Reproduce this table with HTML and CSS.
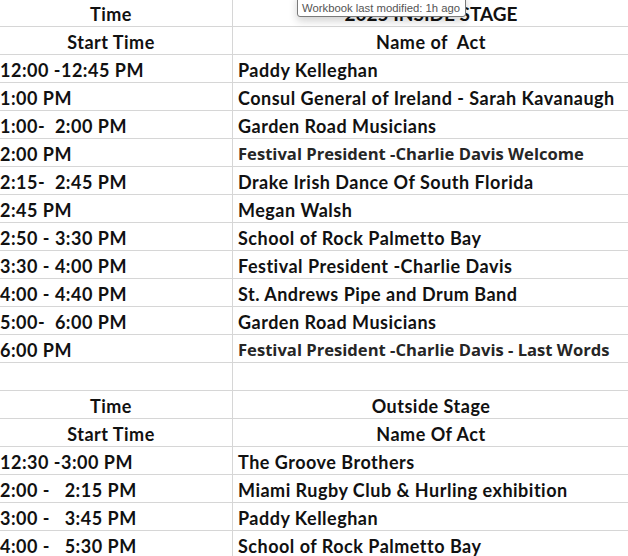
FILE: index.html
```html
<!DOCTYPE html>
<html>
<head>
<meta charset="utf-8">
<link rel="stylesheet" href="styles.css">
</head>
<body>
<div class="sheet">
  <div class="cell time head">Time</div><div class="cell act head title">2025 INSIDE STAGE</div>
  <div class="cell time head">Start Time</div><div class="cell act head">Name of&nbsp; Act</div>
  <div class="cell time">12:00 -12:45 PM</div><div class="cell act">Paddy Kelleghan</div>
  <div class="cell time">1:00 PM</div><div class="cell act">Consul General of Ireland - Sarah Kavanaugh</div>
  <div class="cell time">1:00-&nbsp; 2:00 PM</div><div class="cell act">Garden Road Musicians</div>
  <div class="cell time">2:00 PM</div><div class="cell act alt">Festival President -Charlie Davis Welcome</div>
  <div class="cell time">2:15-&nbsp; 2:45 PM</div><div class="cell act">Drake Irish Dance Of South Florida</div>
  <div class="cell time">2:45 PM</div><div class="cell act">Megan Walsh</div>
  <div class="cell time">2:50 - 3:30 PM</div><div class="cell act">School of Rock Palmetto Bay</div>
  <div class="cell time">3:30 - 4:00 PM</div><div class="cell act">Festival President -Charlie Davis</div>
  <div class="cell time">4:00 - 4:40 PM</div><div class="cell act">St. Andrews Pipe and Drum Band</div>
  <div class="cell time">5:00-&nbsp; 6:00 PM</div><div class="cell act">Garden Road Musicians</div>
  <div class="cell time">6:00 PM</div><div class="cell act alt">Festival President -Charlie Davis - Last Words</div>
  <div class="cell time"></div><div class="cell act"></div>
  <div class="cell time head">Time</div><div class="cell act head">Outside Stage</div>
  <div class="cell time head">Start Time</div><div class="cell act head">Name Of Act</div>
  <div class="cell time">12:30 -3:00 PM</div><div class="cell act">The Groove Brothers</div>
  <div class="cell time">2:00 -&nbsp;&nbsp; 2:15 PM</div><div class="cell act">Miami Rugby Club &amp; Hurling exhibition</div>
  <div class="cell time">3:00 -&nbsp;&nbsp; 3:45 PM</div><div class="cell act">Paddy Kelleghan</div>
  <div class="cell time">4:00 -&nbsp;&nbsp; 5:30 PM</div><div class="cell act">School of Rock Palmetto Bay</div>
</div>
<div class="tooltip">Workbook last modified: 1h ago</div>
</body>
</html>
```
FILE: styles.css
```css
html, body {
  margin: 0;
  padding: 0;
  background: #ffffff;
  overflow: hidden;
}
body {
  width: 628px;
  height: 556px;
  position: relative;
  font-family: Lato, "Open Sans", sans-serif;
  color: #111111;
}
.sheet {
  display: grid;
  grid-template-columns: 233px 420px;
  grid-auto-rows: 28px;
  margin-top: -1px;
}
.cell {
  box-sizing: border-box;
  border-bottom: 1px solid #d6d6d6;
  display: flex;
  align-items: center;
  white-space: pre;
  font-weight: 700;
  font-size: 18px;
  letter-spacing: 0.5px;
  padding-top: 2px;
  overflow: hidden;
}
.time {
  border-right: 1px solid #d6d6d6;
  padding-left: 0;
}
.act {
  padding-left: 5px;
}
.head.time {
  justify-content: center;
  padding-right: 10px;
}
.head.act {
  justify-content: center;
  padding-left: 0;
  padding-right: 24px;
}
.title {
  font-size: 19px;
  letter-spacing: 0;
}
.alt {
  font-family: "Open Sans", sans-serif;
  font-weight: 700;
  font-size: 16.6px;
  letter-spacing: 0;
  color: #262626;
}
.tooltip {
  position: absolute;
  left: 297px;
  top: -6px;
  height: 23px;
  box-sizing: border-box;
  border: 1px solid #7a7a7a;
  border-radius: 3px;
  background: #ffffff;
  font-family: "Liberation Sans", Arial, sans-serif;
  font-size: 11.3px;
  color: #555555;
  padding: 7px 5px 0 4px;
  line-height: 13px;
  white-space: nowrap;
  box-shadow: 0 4px 8px rgba(0, 0, 0, 0.18);
}
```
